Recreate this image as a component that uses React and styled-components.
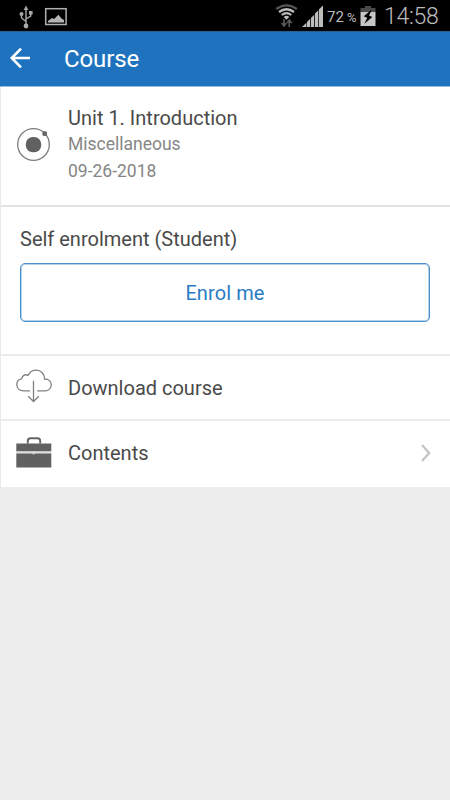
import React from "react";
import styled, { createGlobalStyle } from "styled-components";

const GlobalStyle = createGlobalStyle`
  * {
    box-sizing: border-box;
  }
  body {
    margin: 0;
    background: #ededed;
    font-family: Roboto, "Liberation Sans", sans-serif;
  }
  svg {
    display: block;
    flex: none;
  }
`;

const Screen = styled.div`
  width: 450px;
  height: 800px;
  overflow: hidden;
  background: #ededed;
`;

const StatusBar = styled.div`
  height: 31px;
  display: flex;
  justify-content: space-between;
  background: #000;
  color: #bcbcbc;
`;

const StatusGroup = styled.div`
  display: flex;
`;

const Battery = styled.span`
  width: 36px;
  padding-left: 3px;
  font-size: 15px;
  line-height: 35px;
  letter-spacing: 0.1px;
  white-space: nowrap;

  small {
    margin-left: 3px;
    font-size: 13px;
  }
`;

const Clock = styled.span`
  width: 74px;
  padding-left: 8px;
  font-size: 23px;
  font-weight: 300;
  line-height: 33px;
  letter-spacing: -0.3px;
`;

const Header = styled.header`
  height: 56px;
  display: flex;
  align-items: center;
  background: #1f73be;
  border-top: 1px solid #2a608f;
  border-bottom: 1px solid #94bbdf;
  color: #fff;
`;

const Title = styled.h1`
  margin: 0 0 0 24px;
  font-size: 24px;
  font-weight: 400;
  line-height: 28px;
  letter-spacing: -0.1px;
`;

const List = styled.main`
  border-left: 1px solid #e9e9e9;
  background: #fff;
`;

const Summary = styled.section`
  height: 120px;
  display: flex;
  align-items: center;
  border-bottom: 2px solid #e2e2e2;
  padding-bottom: 2px;
`;

const Line = styled.div`
  font-size: ${(p) => (p.$main ? "20px" : "17.5px")};
  line-height: ${(p) => (p.$main ? "25px" : "27px")};
  color: ${(p) => (p.$main ? "#4a4a4a" : "#868686")};
  letter-spacing: ${(p) => p.$spacing || "0"};
`;

const Enrolment = styled.section`
  height: 149px;
  padding: 19px 20px 0 19px;
  border-bottom: 2px solid #ececec;
`;

const Button = styled.button`
  display: block;
  width: 100%;
  height: 59px;
  margin-top: 11px;
  padding: 0;
  border: 1px solid #4b90cd;
  border-radius: 5px;
  background: #fff;
  box-shadow: inset 0 0 0 1px #b5d2eb;
  color: #2a7bc4;
  font-family: inherit;
  font-size: 20px;
  letter-spacing: 0.1px;
  cursor: pointer;
`;

const Row = styled.div`
  height: ${(p) => p.$height}px;
  display: flex;
  align-items: center;
  padding-bottom: ${(p) => (p.$last ? "2px" : "0")};
  border-bottom: ${(p) => (p.$last ? "1px" : "2px")} solid #ececec;
`;

const Label = styled.div`
  flex: 1;
  font-size: 20px;
  line-height: 26px;
  color: #4a4a4a;
  letter-spacing: ${(p) => p.$spacing || "0"};
`;

const UsbIcon = () => (
  <svg width="36" height="31" fill="none" stroke="#a9a9a9" strokeWidth="1.4">
    <path d="M26 8V26M26 21.5L21.5 18V14M26 19L30.7 16V12" />
    <path d="M26 5.5L28.3 10H23.7Z" fill="#a9a9a9" stroke="none" />
    <circle cx="21.5" cy="14" r="2" fill="#a9a9a9" stroke="none" />
    <path d="M29 11H32.6V14.6H29Z" fill="#a9a9a9" stroke="none" />
    <circle cx="26" cy="26" r="2.4" fill="#a9a9a9" stroke="none" />
  </svg>
);

const PictureIcon = () => (
  <svg width="36" height="31">
    <rect x="9.7" y="8.7" width="20.4" height="15.8" fill="none" stroke="#b0b0b0" strokeWidth="1.5" />
    <path d="M12 22.5V21L16 18L18 19L22.5 14.8L25.5 18.5L28 20V22.5Z" fill="#b5b5b5" />
  </svg>
);

const WifiIcon = () => (
  <svg width="24" height="31" fill="none">
    <path d="M1.2 9Q11.5 1.8 21.8 9" stroke="#555" strokeWidth="2.4" />
    <path d="M4 12Q11.5 6.5 19 12" stroke="#bcbcbc" strokeWidth="2.2" />
    <path d="M6.7 15Q11.5 11.3 16.3 15" stroke="#bcbcbc" strokeWidth="2" />
    <path d="M8.7 17Q11.5 14.6 14.3 17L11.5 19.8Z" fill="#bcbcbc" />
    <path d="M9 19V26M6.5 23L9 26L11.2 23M14.3 27V20M12 23L14.3 20L16.8 23" stroke="#5b5b5b" strokeWidth="1.6" />
  </svg>
);

const SignalIcon = () => (
  <svg width="25" height="31" fill="#bdbdbd">
    <path d="M3 27L7.4 22.8V27ZM8 27V22L11.2 18.8V27ZM12 27V18L15.2 14.8V27ZM16 27V13.5L19.3 10.2V27ZM20 27V9.2L24 5.5V27Z" />
  </svg>
);

const ChargingIcon = () => (
  <svg width="16" height="31">
    <path d="M5 6H11V8H15.5V12H.5V8H5Z" fill="#4a4a4a" />
    <path d="M.5 12H15.5V26H.5Z" fill="#c6c6c6" />
    <path d="M10.5 10.5L3.8 16.3L7.2 17.8L4.4 23.8L12.3 17L9 15.5L11.5 10.5Z" fill="#000" />
  </svg>
);

const BackIcon = () => (
  <svg width="40" height="54" fill="none" stroke="#fff" strokeWidth="2.6">
    <path d="M30 26H12M21 16.7L11.8 26L21 35.3" />
  </svg>
);

const CourseIcon = () => (
  <svg width="67" height="40" fill="none">
    <circle cx="32.5" cy="19.5" r="15.8" stroke="#7c7c7c" strokeWidth="1.3" />
    <rect x="24.8" y="11.9" width="15.4" height="15.4" rx="7" fill="#616161" />
    <rect x="41.4" y="6.3" width="4.6" height="4.6" rx="1.6" fill="#666" />
  </svg>
);

const DownloadIcon = () => (
  <svg width="67" height="40" fill="none" stroke="#818181" strokeWidth="1.3">
    <path d="M29 22.8H22.5C18.3 22.8 15.8 20 15.8 16.6C15.8 13.3 18 11.2 20.7 10.8C20.8 7.8 24 5.8 27.2 7.3C28.8 3.5 31.8 2.1 35.2 2.1C39.7 2.1 43.5 5.4 43.6 11C47.8 11 50.3 13.5 50.3 16.8C50.3 20.3 47.6 22.8 44 22.8H36.2" />
    <path d="M32.5 12.8V33.3M27.2 28.3L32.5 33.5L37.8 28.3" />
  </svg>
);

const BriefcaseIcon = () => (
  <svg width="67" height="40" fill="#616161">
    <path d="M26.8 10.5V8Q26.8 5.2 29.5 5.2H36.5Q39.2 5.2 39.2 8V10.5" fill="none" stroke="#646464" strokeWidth="1.9" />
    <path d="M15.3 10.5H50.3V18.5H15.3ZM15.3 20.3H50.3V34.5H15.3Z" />
    <rect x="15.3" y="18.5" width="35" height="1.8" fill="#dedede" />
    <rect x="31.3" y="18" width="2.6" height="3.2" fill="#d6d6d6" />
  </svg>
);

const ChevronIcon = () => (
  <svg width="30" height="20" fill="none" stroke="#c4c4c4" strokeWidth="2.3">
    <path d="M2 2L9.2 10L2 18" />
  </svg>
);

const App = () => {
  return (
    <Screen>
      <GlobalStyle />
      <StatusBar>
        <StatusGroup>
          <UsbIcon />
          <PictureIcon />
        </StatusGroup>
        <StatusGroup>
          <WifiIcon />
          <SignalIcon />
          <Battery>
            72<small>%</small>
          </Battery>
          <ChargingIcon />
          <Clock>14:58</Clock>
        </StatusGroup>
      </StatusBar>

      <Header>
        <BackIcon />
        <Title>Course</Title>
      </Header>

      <List>
        <Summary>
          <CourseIcon />
          <div>
            <Line $main>Unit 1. Introduction</Line>
            <Line>Miscellaneous</Line>
            <Line>09-26-2018</Line>
          </div>
        </Summary>

        <Enrolment>
          <Label>Self enrolment (Student)</Label>
          <Button>Enrol me</Button>
        </Enrolment>

        <Row $height={65}>
          <DownloadIcon />
          <Label>Download course</Label>
        </Row>
        <Row $height={67} $last>
          <BriefcaseIcon />
          <Label>Contents</Label>
          <ChevronIcon />
        </Row>
      </List>
    </Screen>
  );
};

export default App;
